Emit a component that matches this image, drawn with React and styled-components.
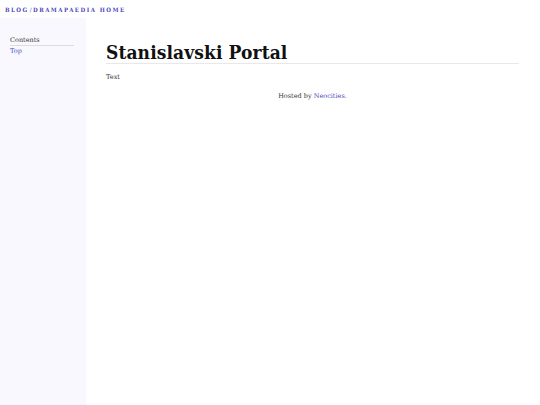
import styled, { createGlobalStyle } from "styled-components";

const GlobalStyle = createGlobalStyle`
 html, body {
  margin: 0;
  padding: 0;
  background: #fff;
 }
 body {
  font-family: "DejaVu Serif", "Liberation Serif", serif;
  color: #222;
 }
`;

const Page = styled.div`
 display: flex;
 flex-direction: column;
 min-height: 405px;
`;

const TopBar = styled.nav`
 display: flex;
 align-items: center;
 height: 18px;
 padding: 0 5px;
 font-family: "DejaVu Serif Condensed", "DejaVu Serif", serif;
 font-size: 6px;
 font-weight: bold;
 letter-spacing: 1.5px;
 text-transform: uppercase;
`;

const NavLink = styled.a`
 color: #4b47c0;
 text-decoration: none;
`;

const Slash = styled.span`
 color: #4b47c0;
 font-weight: normal;
 margin-left: 1px;
`;

const Body = styled.div`
 display: flex;
 flex: 1;
`;

const Sidebar = styled.aside`
 width: 76px;
 padding: 18px 0 0 10px;
 background: #f8f8fe;
 font-size: 6.5px;
`;

const SidebarTitle = styled.div`
 width: 64px;
 padding-bottom: 1px;
 border-bottom: 1px solid #ddd;
 color: #333;
`;

const SidebarLink = styled.a`
 display: block;
 margin-top: 1px;
 color: #4b47c0;
 text-decoration: none;
`;

const Main = styled.main`
 flex: 1;
 padding: 25px 21px 0 20px;
`;

const Heading = styled.h1`
 margin: 0;
 padding-bottom: 1px;
 border-bottom: 1px solid #e8e8e8;
 font-family: "DejaVu Serif Condensed", "DejaVu Serif", serif;
 font-size: 19px;
 line-height: 1;
 font-weight: bold;
 letter-spacing: 0.1px;
 color: #111;
`;

const Paragraph = styled.p`
 margin: 9px 0 0;
 font-size: 6.5px;
 color: #333;
`;

const Footer = styled.footer`
 margin-top: 11px;
 text-align: center;
 font-size: 6.5px;
 color: #333;
`;

const FooterLink = styled.a`
 color: #4b47c0;
 text-decoration: none;
`;

export default function App() {
 return (
  <Page>
   <GlobalStyle />
   <TopBar>
    <NavLink href="#">Blog</NavLink>
    <Slash>/</Slash>
    <NavLink href="#">Dramapaedia Home</NavLink>
   </TopBar>
   <Body>
    <Sidebar>
     <SidebarTitle>Contents</SidebarTitle>
     <SidebarLink href="#">Top</SidebarLink>
    </Sidebar>
    <Main>
     <Heading>Stanislavski Portal</Heading>
     <Paragraph>Text</Paragraph>
     <Footer>
      Hosted by <FooterLink href="#">Neocities</FooterLink>.
     </Footer>
    </Main>
   </Body>
  </Page>
 );
}
